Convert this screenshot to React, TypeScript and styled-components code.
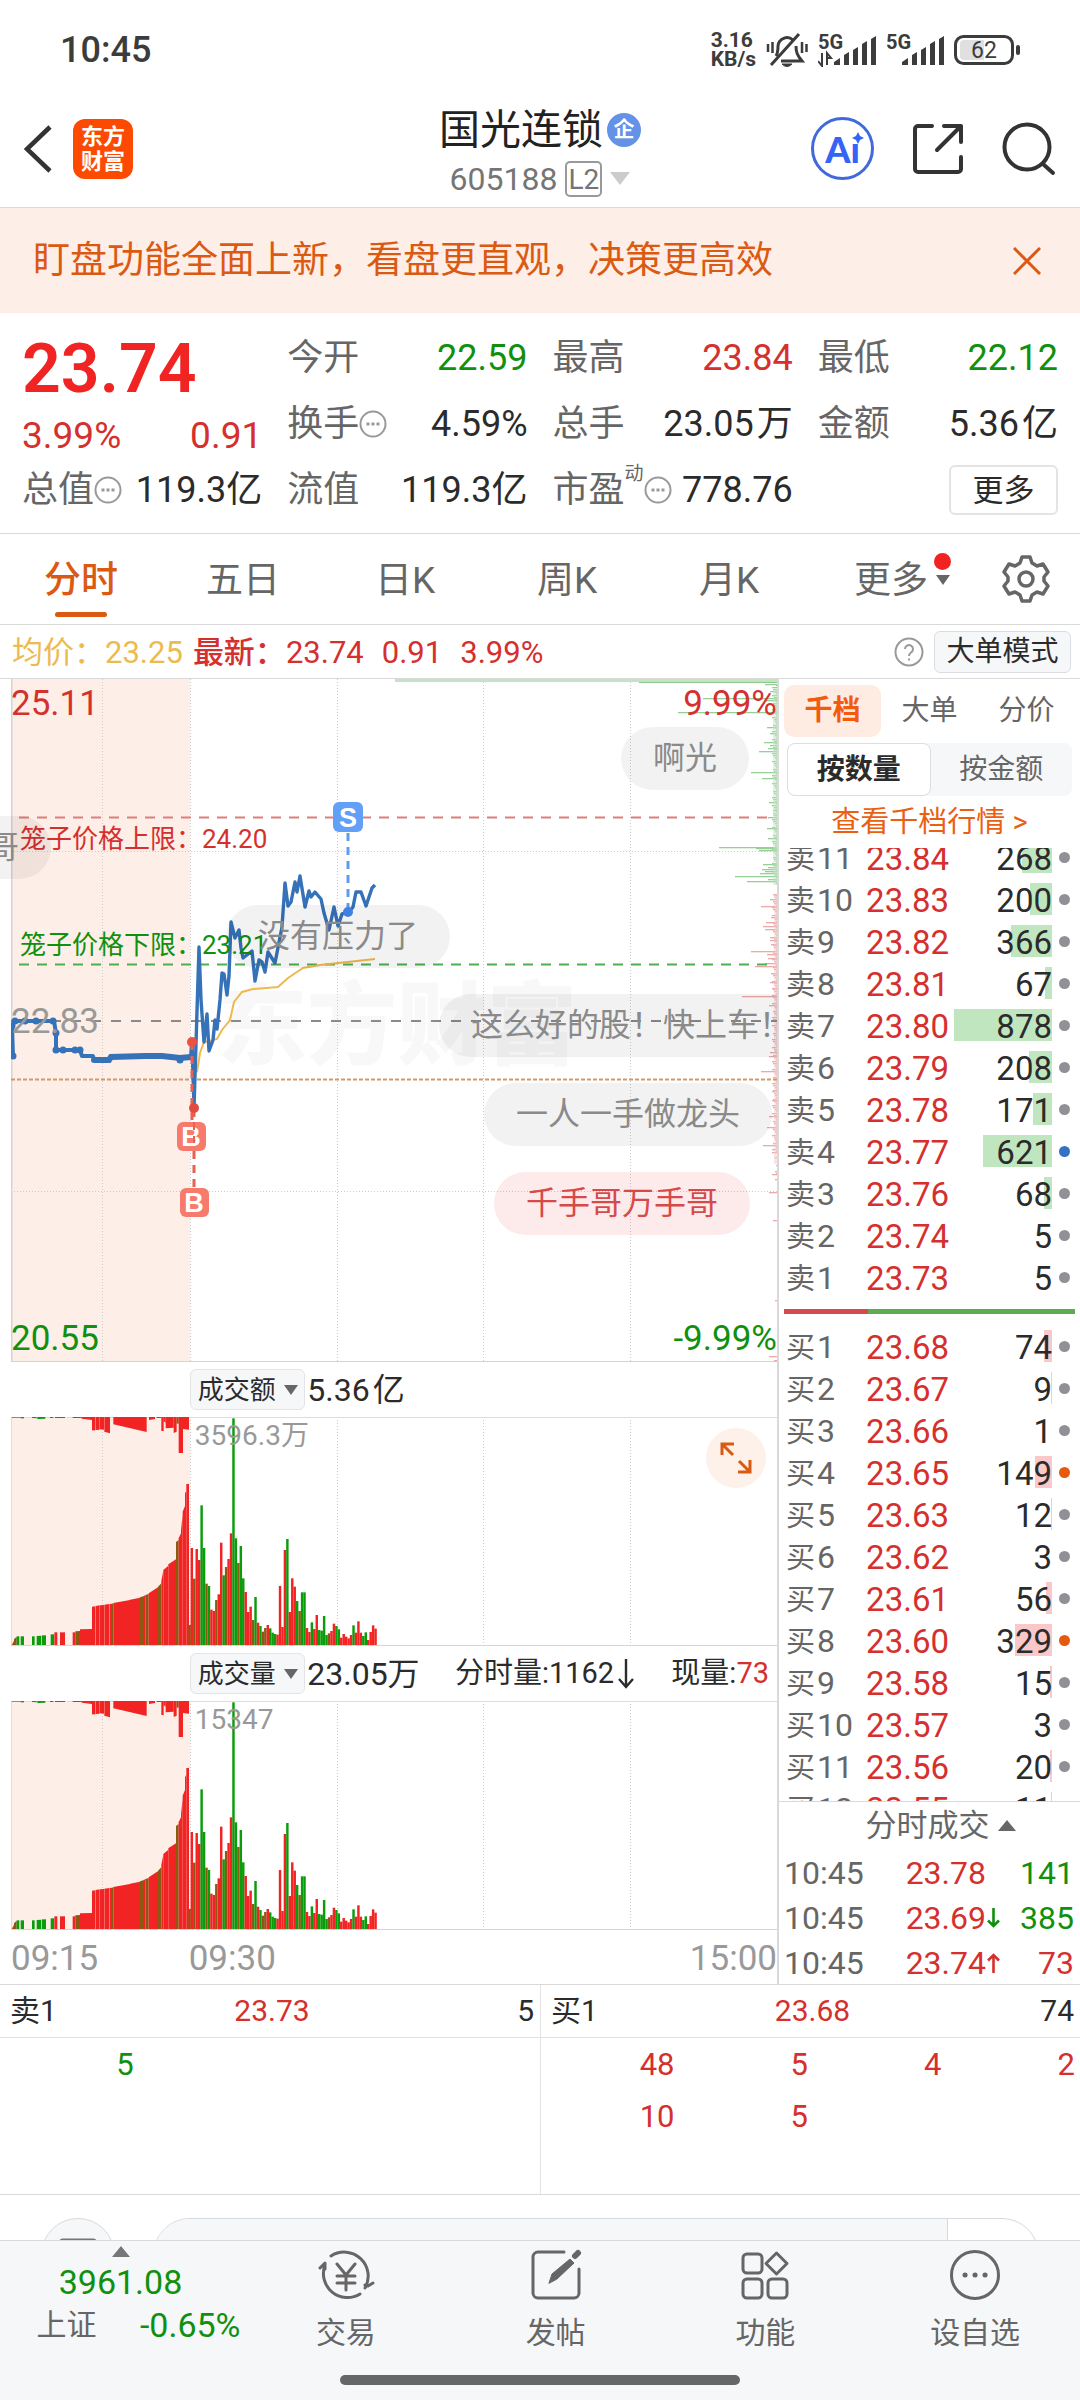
import React, { useState } from 'react';
import styled, { createGlobalStyle, css } from 'styled-components';

const c = {
  red: '#d5302e',
  hotRed: '#f12424',
  green: '#10900f',
  orange: '#db5a12',
  brand: '#fc4a02',
  ink: '#2b2b2b',
  gray: '#666',
  mute: '#999',
  line: '#d9d9d9',
  soft: '#f6f7f9',
  peach: '#fdeee7',
  blue: '#3572b8',
};

const Global = createGlobalStyle`
  * { box-sizing: border-box; }
  body {
    margin: 0;
    background: #fff;
    color: ${c.ink};
    font-family: Roboto, "Noto Sans CJK SC", sans-serif;
    font-size: 30px;
    line-height: 1;
    white-space: nowrap;
  }
  button {
    font: inherit;
    color: inherit;
    background: none;
    border: 0;
    padding: 0;
    margin: 0;
    cursor: pointer;
  }
  svg { display: block; }
`;

const Page = styled.div`
  min-height: 100vh;
  display: flex;
  flex-direction: column;
  overflow: hidden;
`;

/* ---------- status bar ---------- */
const StatusBar = styled.div`
  display: flex;
  align-items: center;
  justify-content: space-between;
  height: 98px;
  padding: 2px 60px 0;
  color: #3c3c3c;
`;
const Clock = styled.time`
  font-size: 36px;
  font-weight: 500;
`;
const StatusIcons = styled.div`
  display: flex;
  align-items: center;
  gap: 10px;
`;
const NetSpeed = styled.div`
  font-size: 21px;
  font-weight: 700;
  line-height: 19px;
`;
const SignalTag = styled.text`
  font: 700 20px Roboto, sans-serif;
  fill: #3c3c3c;
`;
const BatteryText = styled.text`
  font: 400 23px Roboto, sans-serif;
  fill: #3c3c3c;
  text-anchor: middle;
`;

/* ---------- header ---------- */
const Header = styled.header`
  display: grid;
  grid-template-columns: 1fr auto 1fr;
  align-items: center;
  height: 110px;
  padding: 0 24px;
  border-bottom: 1px solid ${c.line};
`;
const HeaderSide = styled.div<{ $end?: boolean }>`
  display: flex;
  align-items: center;
  gap: ${p => (p.$end ? 38 : 21)}px;
  padding-bottom: 8px;
  justify-content: ${p => (p.$end ? 'flex-end' : 'flex-start')};
`;
const Logo = styled.div`
  width: 60px;
  height: 60px;
  padding-top: 5px;
  border-radius: 12px;
  background: ${c.brand};
  color: #fff;
  font-size: 22px;
  line-height: 25px;
  font-weight: 700;
  text-align: center;
`;
const TitleBlock = styled.div`
  display: flex;
  flex-direction: column;
  align-items: center;
  gap: 10px;
`;
const TitleLine = styled.div`
  display: flex;
  align-items: center;
  gap: 4px;
`;
const StockName = styled.h1`
  margin: 0;
  font-size: 41px;
  font-weight: 400;
  line-height: 42px;
  color: #222;
`;
const CorpBadge = styled.span`
  width: 34px;
  height: 34px;
  border-radius: 50%;
  background: #6492e6;
  color: #fff;
  font-size: 21px;
  line-height: 33px;
  font-weight: 700;
  text-align: center;
`;
const CodeLine = styled.div`
  display: flex;
  align-items: center;
  gap: 8px;
  font-size: 32px;
  line-height: 36px;
  color: #757575;
`;
const LevelTag = styled.span`
  width: 37px;
  height: 36px;
  border: 2px solid #999;
  border-radius: 5px;
  font-size: 28px;
  line-height: 33px;
  text-align: center;
`;
const Triangle = styled.i<{ $size: number; $color: string; $up?: boolean }>`
  width: 0;
  height: 0;
  border: ${p => p.$size}px solid transparent;
  ${p =>
    p.$up
      ? css`border-top: 0; border-bottom: ${p.$size + 2}px solid ${p.$color};`
      : css`border-bottom: 0; border-top: ${p.$size + 3}px solid ${p.$color};`}
`;
const AiButton = styled.button`
  position: relative;
  width: 63px;
  height: 63px;
  border: 3px solid #4169dd;
  border-radius: 50%;
  color: #3563f5;
  font-family: Lato, sans-serif;
  font-size: 36px;
  font-weight: 900;
  svg { position: absolute; left: 37px; top: 11px; }
`;

/* ---------- banner ---------- */
const Banner = styled.div`
  display: flex;
  align-items: center;
  justify-content: space-between;
  height: 105px;
  padding: 0 39px 0 33px;
  background: ${c.peach};
  color: ${c.orange};
  font-size: 37px;
`;

/* ---------- quote ---------- */
const Quote = styled.section`
  display: grid;
  grid-template-columns: repeat(4, 1fr);
  grid-template-rows: repeat(3, 66px);
  column-gap: 25px;
  padding: 12px 22px 10px;
  border-bottom: 1px solid ${c.line};
`;
const PriceCell = styled.div`
  grid-row: span 2;
  display: flex;
  flex-direction: column;
  color: ${c.hotRed};
`;
const BigPrice = styled.strong`
  font-size: 68px;
  line-height: 88px;
  font-weight: 600;
`;
const ChangeRow = styled.div`
  display: flex;
  justify-content: space-between;
  font-size: 37px;
  line-height: 46px;
  color: ${c.red};
`;
const Stat = styled.div<{ $color?: string }>`
  display: flex;
  align-items: center;
  justify-content: space-between;
  font-size: 36px;
  color: ${p => p.$color || c.ink};
`;
const Unit = styled.span`
  margin-left: 3px;
`;
const StatLabel = styled.span`
  display: flex;
  align-items: center;
  color: ${c.gray};
  sup { font-size: 19px; align-self: flex-start; margin-top: -8px; }
`;
const MoreCell = styled.div`
  display: flex;
  align-items: center;
  justify-content: flex-end;
`;
const MoreButton = styled.button`
  width: 109px;
  height: 50px;
  border: 2px solid #e4e4e4;
  border-radius: 6px;
  font-size: 31px;
`;

/* ---------- period tabs ---------- */
const Tabs = styled.nav`
  display: flex;
  height: 91px;
  border-bottom: 1px solid ${c.line};
`;
const Tab = styled.button<{ $active?: boolean }>`
  flex: 3;
  position: relative;
  padding-top: 2px;
  font-size: 37px;
  color: ${p => (p.$active ? c.orange : c.gray)};
  font-weight: ${p => (p.$active ? 500 : 400)};
  ${p =>
    p.$active &&
    css`
      &::after {
        content: '';
        position: absolute;
        left: calc(50% - 26px);
        bottom: 7px;
        width: 52px;
        height: 5px;
        border-radius: 3px;
        background: ${c.orange};
      }
    `}
`;
const TabMark = styled.span`
  position: absolute;
  left: calc(50% + 43px);
  top: 19px;
  display: flex;
  flex-direction: column;
  align-items: center;
  gap: 5px;
`;
const Dot = styled.i<{ $size: number; $color: string }>`
  display: inline-block;
  width: ${p => p.$size}px;
  height: ${p => p.$size}px;
  border-radius: 50%;
  background: ${p => p.$color};
`;
const GearButton = styled.button`
  flex: 2;
  display: flex;
  align-items: center;
  justify-content: center;
`;

/* ---------- info line ---------- */
const InfoLine = styled.div`
  display: flex;
  align-items: center;
  gap: 10px;
  height: 54px;
  padding: 1px 9px 0 12px;
  border-bottom: 1px solid ${c.line};
  font-size: 31px;
  color: ${c.red};
`;
const AvgText = styled.span`
  color: #ecbb50;
`;
const LatestText = styled.span`
  display: flex;
  gap: 18px;
  flex: 1;
  b { font-weight: 500; margin-right: -18px; }
`;
const ModeButton = styled.button`
  width: 137px;
  height: 42px;
  border: 1px solid #dadde2;
  border-radius: 6px;
  background: ${c.soft};
  color: ${c.ink};
  font-size: 28px;
`;

/* ---------- main area ---------- */
const Main = styled.main`
  display: flex;
  border-bottom: 1px solid ${c.line};
`;
const Charts = styled.div`
  flex: 1;
  min-width: 0;
  position: relative;
  padding-left: 11px;
  overflow: hidden;
  border-right: 2px solid ${c.line};
`;
const Plot = styled.svg`
  width: 100%;
`;
const PlotBox = styled.div`
  position: relative;
`;
const AxisLabel = styled.span<{ $color: string; $x: 'left' | 'right'; $y: string }>`
  position: absolute;
  ${p => p.$x}: 0;
  top: ${p => p.$y};
  font-size: 35px;
  line-height: 34px;
  color: ${p => p.$color};
`;
const CageLabel = styled.span<{ $color: string; $top: number }>`
  position: absolute;
  left: 9px;
  top: ${p => p.$top}px;
  font-size: 26px;
  line-height: 30px;
  color: ${p => p.$color};
`;
const Bubble = styled.span<{ $top: number; $right?: number; $left?: number; $hot?: boolean }>`
  position: absolute;
  top: ${p => p.$top}px;
  ${p => (p.$left !== undefined ? `left: ${p.$left}px;` : `right: ${p.$right}px;`)}
  height: 63px;
  padding: 0 32px;
  border-radius: 32px;
  background: ${p => (p.$hot ? 'rgba(240,60,60,.1)' : 'rgba(0,0,0,.05)')};
  color: ${p => (p.$hot ? '#d64a4a' : '#8a8a8a')};
  font-size: 32px;
  line-height: 63px;
`;
const Watermark = styled.text`
  font: 900 90px "Noto Sans CJK SC", sans-serif;
  fill: #f8f8f8;
`;
const MarkText = styled.text`
  font: 700 27px "Liberation Sans", sans-serif;
  fill: #fff;
  text-anchor: middle;
`;
const PanelHead = styled.div`
  display: flex;
  align-items: center;
  height: 55px;
  padding: 0 8px 0 23.4%;
  font-size: 32px;
`;
const MetricButton = styled.button`
  display: flex;
  align-items: center;
  justify-content: center;
  gap: 8px;
  width: 115px;
  height: 41px;
  margin-right: 2px;
  border: 1px solid #e2e4e8;
  border-radius: 6px;
  background: ${c.soft};
  font-size: 26px;
`;
const SideMetric = styled.span`
  display: flex;
  align-items: center;
  margin-left: auto;
  font-size: 29px;
  em { font-style: normal; color: ${c.red}; }
`;
const PeakLabel = styled.span`
  position: absolute;
  left: 24%;
  top: 4px;
  font-size: 28px;
  line-height: 30px;
  color: ${c.mute};
`;
const ExpandButton = styled.button`
  position: absolute;
  right: 11px;
  top: 11px;
  width: 60px;
  height: 60px;
  border-radius: 50%;
  background: #fdf1ea;
  display: flex;
  align-items: center;
  justify-content: center;
`;
const TimeAxis = styled.div`
  display: grid;
  grid-template-columns: 23.2% 1fr auto;
  align-items: center;
  height: 54px;
  padding-top: 2px;
  font-size: 35px;
  color: ${c.mute};
`;

/* ---------- order book ---------- */
const Side = styled.aside`
  width: 301px;
  padding-top: 6px;
`;
const BookTabs = styled.div`
  display: flex;
  height: 52px;
  margin: 0 5px 6px;
`;
const BookTab = styled.button<{ $active?: boolean }>`
  flex: 1;
  border-radius: 10px;
  font-size: 28px;
  background: ${p => (p.$active ? '#feece3' : 'transparent')};
  color: ${p => (p.$active ? '#f25a0c' : c.gray)};
  font-weight: ${p => (p.$active ? 700 : 400)};
`;
const Segment = styled.div`
  display: flex;
  height: 53px;
  margin: 0 8px;
  border-radius: 8px;
  background: ${c.soft};
`;
const SegmentButton = styled.button<{ $active?: boolean }>`
  flex: 1;
  border-radius: 8px;
  font-size: 28px;
  color: ${p => (p.$active ? c.ink : c.gray)};
  font-weight: ${p => (p.$active ? 700 : 400)};
  ${p => p.$active && css`border: 1px solid #dcdee2; background: #fff;`}
`;
const BookLink = styled.a`
  display: block;
  height: 52px;
  line-height: 52px;
  text-align: center;
  text-decoration: none;
  font-size: 29px;
  color: #ea6012;
`;
const BookClip = styled.div<{ $height: number; $bottom?: boolean }>`
  height: ${p => p.$height}px;
  padding-left: 7px;
  overflow: hidden;
  display: flex;
  flex-direction: column;
  justify-content: ${p => (p.$bottom ? 'flex-end' : 'flex-start')};
`;
const BookTable = styled.table`
  width: 100%;
  flex-shrink: 0;
  table-layout: fixed;
  border-collapse: collapse;
  td, th { height: 42px; padding: 0; font-weight: 400; }
`;
const LevelCell = styled.th`
  width: 72px;
  font-size: 29px;
  text-align: left;
  color: ${c.gray};
  span { margin-left: 2px; font-size: 32px; }
`;
const BookPrice = styled.td`
  width: 91px;
  text-align: right;
  font-size: 33px;
  color: ${c.red};
`;
const QtyCell = styled.td`
  position: relative;
  text-align: right;
  font-size: 33px;
`;
const QtyBar = styled.i<{ $buy?: boolean }>`
  position: absolute;
  right: 0;
  top: 4px;
  height: 32px;
  background: ${p => (p.$buy ? '#fac8c8' : '#c0e6c0')};
`;
const QtyText = styled.span`
  position: relative;
`;
const FlagCell = styled.td`
  width: 28px;
  text-align: center;
  i { vertical-align: middle; margin: 0 4px 6px 0; }
`;
const RatioBar = styled.div`
  display: flex;
  height: 5px;
  margin: 10px 5px 12px;
  background: #5dac50;
`;
const RatioBuy = styled.i`
  background: #d24b4d;
`;
const TradesHead = styled.button`
  display: flex;
  width: 100%;
  height: 48px;
  align-items: center;
  justify-content: center;
  gap: 8px;
  padding-left: 22px;
  border-top: 1px solid ${c.line};
  font-size: 31px;
  color: ${c.gray};
`;
const TradeTable = styled.table`
  width: 100%;
  table-layout: fixed;
  border-collapse: collapse;
  font-size: 32px;
  td { height: 45px; padding: 2px 0 0; text-align: right; }
  td:first-child { width: 106px; padding-left: 5px; text-align: left; color: ${c.gray}; }
  td:nth-child(2) { width: 101px; color: ${c.red}; }
  td:nth-child(3) { width: 17px; }
  td:last-child { padding-right: 6px; }
`;
const TradeQty = styled.td<{ $color: string }>`
  color: ${p => p.$color};
`;

/* ---------- queue ---------- */
const Queues = styled.section`
  display: grid;
  grid-template-columns: 1fr 1fr;
  border-bottom: 1px solid ${c.line};
`;
const Queue = styled.div`
  & + & { border-left: 1px solid #e4e4e4; }
`;
const QueueHead = styled.div`
  display: grid;
  grid-template-columns: 1fr auto 1fr;
  align-items: center;
  height: 53px;
  padding: 0 6px 0 10px;
  border-bottom: 1px solid #e0e0e0;
  font-size: 30px;
  b { font-weight: 400; color: ${c.red}; }
  span:last-child { text-align: right; }
`;
const QueueGrid = styled.div<{ $color: string }>`
  display: grid;
  grid-template-columns: repeat(4, 1fr);
  grid-template-rows: repeat(3, 52px);
  align-items: center;
  padding-right: 5px;
  text-align: right;
  font-size: 31px;
  color: ${p => p.$color};
`;

/* ---------- comment strip ---------- */
const Strip = styled.div`
  display: flex;
  gap: 38px;
  height: 45px;
  padding: 23px 41px 0;
  overflow: hidden;
`;
const RoundButton = styled.button`
  flex: none;
  display: flex;
  align-items: flex-start;
  justify-content: center;
  width: 74px;
  height: 74px;
  padding-top: 19px;
  border: 1px solid ${c.line};
  border-radius: 50%;
  background: ${c.soft};
`;
const StripPill = styled.div`
  flex: 1;
  display: flex;
  height: 74px;
  border: 1px solid #d5d9de;
  border-radius: 37px;
  overflow: hidden;
`;
const StripInput = styled.input`
  flex: 1;
  min-width: 0;
  border: 0;
  background: ${c.soft};
`;
const StripAction = styled.button`
  width: 91px;
  border-left: 1px solid ${c.line};
`;

/* ---------- bottom bar ---------- */
const Footer = styled.footer`
  flex: 1;
  border-top: 1px solid ${c.line};
  background: ${c.soft};
`;
const FooterRow = styled.div`
  display: flex;
  height: 134px;
`;
const IndexBlock = styled.button`
  width: 241px;
  display: flex;
  flex-direction: column;
  align-items: center;
  padding-top: 5px;
  font-size: 34px;
  color: ${c.green};
`;
const IndexValue = styled.span`
  margin-top: 2px;
  line-height: 46px;
`;
const IndexLine = styled.span`
  display: flex;
  justify-content: space-between;
  width: 204px;
  line-height: 40px;
  margin-left: 36px;
  font-size: 34px;
  span { font-size: 30px; color: ${c.gray}; }
`;
const NavItem = styled.button`
  flex: 1;
  display: flex;
  flex-direction: column;
  align-items: center;
  gap: 14px;
  padding-top: 8px;
  font-size: 30px;
  line-height: 36px;
  color: ${c.gray};
`;
const HomeBar = styled.div`
  width: 37%;
  height: 10px;
  margin: 0 auto;
  border-radius: 5px;
  background: #666;
`;

/* ---------- data ---------- */
const priceLine: [number, number][] = [
  [192, 1042], [194, 1108], [199, 947], [201, 1000], [204, 1042], [207, 1014], [209, 1051], [213, 1040], [215, 1020],
  [217, 1029], [220, 1000], [222, 973], [224, 974], [227, 995], [229, 976], [231, 922], [235, 938], [239, 930],
  [241, 948], [243, 958], [252, 951], [255, 981], [259, 960], [262, 962], [265, 972], [268, 952], [275, 963],
  [282, 927], [285, 883], [288, 906], [291, 902], [295, 882], [297, 892], [300, 876], [305, 907], [309, 891],
  [311, 897], [315, 892], [321, 899], [324, 913], [329, 930], [334, 907], [338, 926], [342, 914], [349, 912],
  [353, 907], [356, 892], [361, 892], [366, 906], [372, 888], [375, 885],
];
const auctionLine: [number, number][] = [
  [13, 1056], [12, 1026], [15, 1021], [54, 1021], [56, 1033], [56, 1050], [80, 1050], [82, 1056], [93, 1056],
  [94, 1060], [109, 1060], [111, 1057], [145, 1056], [162, 1056], [180, 1058], [191, 1057], [192, 1042],
];
const averageLine: [number, number][] = [
  [194, 1060], [197, 1072], [200, 1053], [204, 1042], [217, 1039], [222, 1030], [230, 1020], [234, 1002], [242, 992],
  [253, 989], [278, 987], [288, 978], [303, 968], [320, 965], [375, 959],
];
const auctionDots: [number, number][] = [
  [13, 1056], [12, 1026], [15, 1021], [25, 1021], [36, 1021], [53, 1021], [56, 1033], [56, 1050], [63, 1050],
  [75, 1050], [80, 1050], [180, 1060],
];
const toPoints = (pts: [number, number][]) => pts.map(([x, y]) => `${x - 11},${y - 679}`).join(' ');

const depth: [number, number, boolean][] = [
  [684, 12, true], [691, 7, true], [698, 74, true], [700, 12, true], [712, 99, true], [727, 10, true], [733, 7, true],
  [742, 13, true], [745, 7, true], [748, 9, true], [751, 18, true], [772, 26, true], [778, 15, true], [802, 8, true],
  [810, 4, true], [817, 9, true], [828, 10, true], [838, 9, true], [847, 58, true], [848, 21, true], [850, 18, true],
  [864, 14, true], [867, 9, true], [869, 15, true], [871, 12, true], [873, 17, true], [876, 42, true], [879, 9, true],
  [881, 30, true], [894, 4, false], [899, 7, false], [906, 16, false], [917, 6, false], [922, 11, false],
  [926, 14, false], [929, 12, false], [937, 7, false], [940, 7, false], [944, 6, false], [951, 26, false],
  [954, 10, false], [958, 9, false], [963, 12, false], [966, 22, false], [973, 6, false], [982, 7, false],
  [988, 5, false], [996, 35, false], [1005, 8, false], [1052, 7, false], [1056, 8, false], [1071, 16, false],
  [1090, 4, false], [1100, 5, false], [1116, 8, false], [1127, 10, false], [1145, 14, false], [1152, 5, false],
  [1174, 5, false], [1192, 8, false], [1220, 4, false], [1300, 2, false], [1356, 8, false], [1360, 3, false],
];
const depthNoise = Array.from({ length: 250 }, (_, i) => {
  const y = 685 + i * 2;
  return [y, ((i * 37) % 11) % 5 + (y > 1150 ? -2 : 1), y < 884] as [number, number, boolean];
}).filter(([y, w]) => w > 0 && (y < 884 || y > 893));

type Tone = 'r' | 'g' | 'm';
const minuteBars = (
  '444r 536m 447r 480r 316g 444g 551m 558g 629r 633r 600m 583r 428r 526g 501m 477r 400r 55g 415g 489m 438g 535g ' +
  '576r 636r 620r 660m 591g 668r 678g 695m 684m 675r 685g 698g 702g 704r 558r 681r 450r 417g 636r 535r 560r 603g ' +
  '633m 577g 577g 684r 696r 667g 687r 645r 690g 692g 648g 705g 700m 693r 671r 678g 688g 713r 702r 710r 715r 705r ' +
  '676g 698r 664r 698r 708g 697g 720r 696r 676r 686r'
)
  .split(' ')
  .map(t => ({ h: (738 - parseInt(t, 10)) / 3, tone: t.slice(-1) as Tone }));

const toneColor: Record<Tone, string> = { r: '#f12323', g: '#0b9c0b', m: '#8a5a12' };

/* start, end, value at start, value at end, tone */
const auctionVolume: [number, number, number, number, Tone][] = [
  [35, 42, 736, 722, 'r'], [42, 50, 718, 710, 'm'], [50, 58, 709, 709, 'g'], [62, 72, 709, 709, 'g'],
  [96, 104, 709, 709, 'g'], [110, 124, 708, 707, 'g'], [126, 138, 706, 706, 'g'], [152, 162, 703, 703, 'g'],
  [163, 172, 697, 697, 'r'], [180, 195, 697, 697, 'r'], [218, 226, 697, 697, 'r'], [226, 240, 694, 693, 'm'],
  [240, 276, 688, 687, 'r'], [276, 286, 620, 619, 'r'], [287, 299, 618, 616, 'r'], [300, 312, 616, 615, 'r'],
  [313, 328, 614, 612, 'r'], [329, 336, 612, 611, 'r'], [336, 340, 611, 610, 'm'], [340, 390, 609, 600, 'r'],
  [390, 420, 599, 593, 'r'], [420, 432, 592, 588, 'm'], [432, 436, 587, 586, 'r'], [436, 446, 585, 582, 'm'],
  [446, 474, 580, 562, 'r'], [474, 484, 560, 550, 'm'], [484, 490, 542, 512, 'r'], [490, 505, 510, 497, 'r'],
  [505, 528, 493, 478, 'r'], [528, 536, 426, 420, 'm'], [536, 543, 415, 400, 'r'], [543, 548, 390, 345, 'r'],
  [548, 555, 335, 318, 'r'], [555, 559, 280, 272, 'r'], [559, 567, 252, 252, 'r'],
];
const auctionUnmatched: [number, number, number, number, Tone][] = [
  [35, 45, 2, 2, 'r'], [45, 62, 2, 2, 'g'], [62, 72, 4, 4, 'g'], [96, 110, 3, 4, 'g'], [112, 136, 6, 5, 'g'],
  [150, 160, 3, 3, 'g'], [165, 195, 3, 3, 'r'], [218, 245, 3, 3, 'm'], [245, 276, 5, 9, 'r'], [276, 286, 40, 40, 'r'],
  [287, 299, 39, 38, 'r'], [300, 312, 37, 38, 'r'], [313, 330, 44, 49, 'r'], [340, 440, 22, 45, 'r'],
  [447, 465, 9, 6, 'r'], [470, 484, 3, 3, 'r'], [484, 491, 42, 42, 'r'], [491, 497, 12, 18, 'r'],
  [497, 521, 34, 32, 'r'], [521, 530, 48, 44, 'r'], [530, 536, 20, 20, 'm'], [536, 549, 108, 108, 'r'],
  [549, 567, 36, 38, 'r'],
];

const fills = (rows: [number, number, number, number, Tone][]) =>
  rows.map(([a, b, v1, v2, tone]) => ({
    x: a / 3 - 11,
    w: (b - a) / 3,
    v1,
    v2,
    color: toneColor[tone],
  }));

const maxQty = 878;
type Level = [string, number, string, number, string?];
const sells: Level[] = [
  ['卖', 11, '23.84', 268], ['卖', 10, '23.83', 200], ['卖', 9, '23.82', 366], ['卖', 8, '23.81', 67],
  ['卖', 7, '23.80', 878], ['卖', 6, '23.79', 208], ['卖', 5, '23.78', 171], ['卖', 4, '23.77', 621, '#3572c4'],
  ['卖', 3, '23.76', 68], ['卖', 2, '23.74', 5], ['卖', 1, '23.73', 5],
];
const buys: Level[] = [
  ['买', 1, '23.68', 74], ['买', 2, '23.67', 9], ['买', 3, '23.66', 1], ['买', 4, '23.65', 149, '#e8590c'],
  ['买', 5, '23.63', 12], ['买', 6, '23.62', 3], ['买', 7, '23.61', 56], ['买', 8, '23.60', 329, '#e8590c'],
  ['买', 9, '23.58', 15], ['买', 10, '23.57', 3], ['买', 11, '23.56', 20], ['买', 12, '23.55', 11],
];

/* ---------- pieces ---------- */
const InfoDots = () => (
  <svg width="28" height="28" viewBox="0 0 28 28" fill="none" stroke="#999" strokeWidth="2">
    <circle cx="14" cy="14" r="12.5" />
    <path d="M7.5 14h3M12.5 14h3M17.5 14h3" strokeWidth="3" />
  </svg>
);

const Signal = ({ data }: { data?: boolean }) => (
  <svg width="58" height="34" viewBox="0 0 58 34" fill="#3c3c3c">
    <SignalTag x="0" y="16">5G</SignalTag>
    {data && <path d="M4 20v12M0 28l4 5v-6M9 32V20l4 5h-4" stroke="#3c3c3c" strokeWidth="2" fill="none" />}
    <path d="M16 32v-3l6-4v7zM26 32V22l5-3v13zM35 32V17l5-3v18zM44 32V11l5-3v24zM53 32V6l5-3v29z" />
  </svg>
);

const Arrow = ({ up, color }: { up?: boolean; color: string }) => (
  <svg width="15" height="24" viewBox="0 0 15 24" fill="none" stroke={color} strokeWidth="2.6">
    <path d={up ? 'M7.5 22V4M2 9.5L7.5 4l5.5 5.5' : 'M7.5 2v18M2 14.5L7.5 20l5.5-5.5'} />
  </svg>
);

const LongArrow = () => (
  <svg width="22" height="32" viewBox="0 0 22 32" fill="none" stroke={c.ink} strokeWidth="2.4">
    <path d="M12 1v28M5 21l7 8 7-8" />
  </svg>
);

const Book = ({ rows, buy }: { rows: Level[]; buy?: boolean }) => (
  <BookTable>
    <tbody>
      {rows.map(([side, n, price, qty, flag]) => (
        <tr key={n}>
          <LevelCell scope="row">
            {side}
            <span>{n}</span>
          </LevelCell>
          <BookPrice>{price}</BookPrice>
          <QtyCell>
            {qty > 5 && <QtyBar $buy={buy} style={{ width: Math.max(1, (qty / maxQty) * 98) }} />}
            <QtyText>{qty}</QtyText>
          </QtyCell>
          <FlagCell>
            <Dot $size={11} $color={flag || '#909096'} />
          </FlagCell>
        </tr>
      ))}
    </tbody>
  </BookTable>
);

const gridX = [91, 179, 326, 472, 619];

const VolumePlot = () => (
  <Plot height="229" viewBox="0 0 766 229" preserveAspectRatio="none">
    <rect width="179" height="229" fill="#fdeee7" />
    <path d={gridX.map(x => `M${x}.5 0V229`).join('')} stroke="#ccc" strokeDasharray="1 2" />
    <path d="M0 .5H766M.5 0V229" stroke="#ddd" />
    {fills(auctionVolume).map((b, i) => (
      <path
        key={i}
        fill={b.color}
        d={`M${b.x} 229V${229 - (738 - b.v1) / 3}L${b.x + b.w} ${229 - (738 - b.v2) / 3}V229Z`}
      />
    ))}
    {fills(auctionUnmatched).map((b, i) => (
      <path key={i} fill={b.color} d={`M${b.x} 0V${b.v1 / 3}L${b.x + b.w} ${b.v2 / 3}V0Z`} />
    ))}
    <rect x="177.5" y="208" width="2.4" height="21" fill={toneColor.m} />
    {minuteBars.map((b, i) => (
      <rect key={i} x={179.6 + i * 2.45} y={229 - b.h} width="2.45" height={b.h} fill={toneColor[b.tone]} />
    ))}
    <path d="M0 228.5H766" stroke="#d4d4d4" />
  </Plot>
);

const PricePlot = () => (
  <Plot height="683" viewBox="0 0 766 683" preserveAspectRatio="none">
    <rect width="179" height="683" fill="#fdeee7" />
    <Watermark x="206" y="378">东方财富</Watermark>
    <path
      d={gridX.map(x => `M${x}.5 0V683`).join('') + 'M0 172.5H766M0 512.5H766'}
      stroke="#ccc"
      strokeDasharray="1 2"
    />
    <path d="M.5 0V683" stroke="#d4d4d4" strokeWidth="2" />
    <path d="M0 682.5H766" stroke="#d4d4d4" />
    <rect x="384" width="382" height="3" fill="#c3e3c3" />
    <rect x="628" y="3" width="138" height="1" fill="#8cc78c" />
    {[...depthNoise, ...depth].map(([y, w, sell], i) => (
      <rect key={i} x={766 - w} y={y - 679} width={w} height="1.3" fill={sell ? '#96d096' : '#eda8a8'} />
    ))}
    <rect x="762" y="10" width="4" height="196" fill="#bfe5bf" opacity=".5" />
    <rect x="763" y="215" width="3" height="270" fill="#f6c9c9" opacity=".5" />
    <path d="M8 138.5H757" stroke="#de7f7d" strokeWidth="2" strokeDasharray="10 8" />
    <path d="M8 285.5H757" stroke="#4fae4f" strokeWidth="2" strokeDasharray="10 8" />
    <path d="M0 342H766" stroke="#8a8a8a" strokeWidth="2" strokeDasharray="10 10" />
    <path d="M0 400.5H766" stroke="#d29a6c" strokeWidth="2" strokeDasharray="4 2" />
    <polyline points={toPoints(averageLine)} fill="none" stroke="#efb850" strokeWidth="2" />
    <polyline points={toPoints(auctionLine)} fill="none" stroke={c.blue} strokeWidth="4" strokeLinejoin="round" />
    <polyline
      points={toPoints(auctionLine.slice(9, 16))}
      fill="none"
      stroke={c.blue}
      strokeWidth="6"
      strokeLinecap="round"
    />
    {auctionDots.map(([x, y], i) => (
      <circle key={i} cx={x - 11} cy={y - 679} r="3.5" fill={c.blue} />
    ))}
    <polyline points={toPoints(priceLine)} fill="none" stroke={c.blue} strokeWidth="3.4" strokeLinejoin="round" />
    <g fill="none" strokeWidth="3" strokeDasharray="8 6">
      <path d="M181 363V445" stroke="#e8604f" />
      <path d="M183 430V510" stroke="#e8604f" />
      <path d="M337 154V233" stroke="#5f9bf0" />
    </g>
    <circle cx="181" cy="363" r="5" fill="#ef5040" />
    <circle cx="183" cy="429" r="5" fill="#e14a3e" />
    <circle cx="337" cy="233" r="5" fill="#4388f0" />
    <rect x="166" y="443" width="29" height="29" rx="6" fill="#f77b6c" />
    <MarkText x="180" y="467">B</MarkText>
    <rect x="169" y="509" width="29" height="29" rx="6" fill="#f77b6c" />
    <MarkText x="183" y="533">B</MarkText>
    <path d="M183 443v8M183 457v7" stroke="#e8604f" strokeWidth="2" />
    <rect x="322" y="123" width="30" height="30" rx="6" fill="#629ff7" />
    <MarkText x="337" y="148">S</MarkText>
  </Plot>
);

const stroke = { fill: 'none', stroke: '#666', strokeWidth: 3, strokeLinecap: 'round' as const, strokeLinejoin: 'round' as const };

const navItems = [
  {
    name: '交易',
    icon: (
      <svg width="58" height="52" viewBox="0 0 58 52" {...stroke}>
        <path d="M14 7a24 24 0 0 1 34 32M43 45A24 24 0 0 1 8 16M3 19l5-5v6M56 34l-5 3-3-1M20 15l9 11 9-11M29 26v15M20 27h18M20 34h18" />
      </svg>
    ),
  },
  {
    name: '发帖',
    icon: (
      <svg width="52" height="52" viewBox="0 0 52 52" {...stroke}>
        <path d="M34 3H8a5 5 0 0 0-5 5v36a5 5 0 0 0 5 5h36a5 5 0 0 0 5-5V20" />
        <path d="M19 34l3-9L40 10l4 4-17 16z" fill="#666" strokeWidth="1" />
        <path d="M45 7l3-3" strokeWidth="6" />
      </svg>
    ),
  },
  {
    name: '功能',
    icon: (
      <svg width="52" height="52" viewBox="0 0 52 52" {...stroke}>
        <rect x="4" y="5" width="19" height="19" rx="4" />
        <rect x="4" y="30" width="19" height="19" rx="4" />
        <rect x="29" y="30" width="19" height="19" rx="4" />
        <path d="M37.500 4L48 14.500 37.500 25 27 14.500z" />
      </svg>
    ),
  },
  {
    name: '设自选',
    icon: (
      <svg width="52" height="52" viewBox="0 0 52 52" {...stroke}>
        <circle cx="26" cy="26" r="23.500" />
        <path d="M16 26h.1M26 26h.1M36 26h.1" strokeWidth="5" />
      </svg>
    ),
  },
];

const periods = ['分时', '五日', '日K', '周K', '月K'];

export default function App() {
  const [period, setPeriod] = useState('分时');
  const [bookTab, setBookTab] = useState('千档');
  const [unit, setUnit] = useState('按数量');

  return (
    <Page>
      <Global />
      <StatusBar>
        <Clock>10:45</Clock>
        <StatusIcons>
          <NetSpeed>3.16<br />KB/s</NetSpeed>
          <svg width="42" height="36" viewBox="0 0 42 36" fill="none" stroke="#3c3c3c" strokeWidth="3">
            <path d="M10 24c2-3 2-6 2-10a9 9 0 0 1 15-6M30 14c0 6 1 9 6 15H15M5 33L33 2" />
            <path d="M16 32q5 5 10 0z" fill="#3c3c3c" strokeWidth="1" />
            <path d="M2 12v8M6.500 10v11M36 10v11M40.500 12v8" strokeWidth="2.500" />
          </svg>
          <Signal data />
          <Signal />
          <svg width="66" height="30" viewBox="0 0 66 30">
            <rect x="1.500" y="1.500" width="57" height="27" rx="8" fill="none" stroke="#3c3c3c" strokeWidth="3" />
            <path d="M10 5h20v20H10a4 4 0 0 1-4-4V9a4 4 0 0 1 4-4z" fill="#e0e0e0" />
            <rect x="62" y="10" width="4" height="10" rx="2" fill="#3c3c3c" />
            <BatteryText x="30" y="23">62</BatteryText>
          </svg>
        </StatusIcons>
      </StatusBar>

      <Header>
        <HeaderSide>
          <button aria-label="返回">
            <svg width="28" height="48" viewBox="0 0 28 48" fill="none" stroke="#333" strokeWidth="4.500">
              <path d="M26 2L3 24l23 22" />
            </svg>
          </button>
          <Logo>东方<br />财富</Logo>
        </HeaderSide>
        <TitleBlock>
          <TitleLine>
            <StockName>国光连锁</StockName>
            <CorpBadge>企</CorpBadge>
          </TitleLine>
          <CodeLine>
            605188
            <LevelTag>L2</LevelTag>
            <Triangle $size={10} $color="#ccc" />
          </CodeLine>
        </TitleBlock>
        <HeaderSide $end>
          <AiButton>
            Ai
            <svg width="14" height="14" viewBox="0 0 14 14">
              <path d="M0 0h14v12H0z" fill="#fff" />
              <path d="M7 1l2 4 4 2-4 2-2 4-2-4-4-2 4-2z" fill="#3563f5" />
            </svg>
          </AiButton>
          <button aria-label="分享">
            <svg width="52" height="52" viewBox="0 0 52 52" fill="none" stroke="#333" strokeWidth="4" strokeLinecap="round" strokeLinejoin="round">
              <path d="M20 3H6a3 3 0 0 0-3 3v40a3 3 0 0 0 3 3h40a3 3 0 0 0 3-3V34M32 3h17v16M49 3L25 27" />
            </svg>
          </button>
          <button aria-label="搜索">
            <svg width="54" height="54" viewBox="0 0 54 54" fill="none" stroke="#333" strokeWidth="4" strokeLinecap="round">
              <circle cx="25" cy="25" r="22.500" />
              <path d="M41 42l10 9" />
            </svg>
          </button>
        </HeaderSide>
      </Header>

      <Banner>
        <span>盯盘功能全面上新，看盘更直观，决策更高效</span>
        <button aria-label="关闭">
          <svg width="28" height="28" viewBox="0 0 28 28" stroke={c.orange} strokeWidth="3">
            <path d="M1 1l26 26M27 1L1 27" />
          </svg>
        </button>
      </Banner>

      <Quote>
        <PriceCell>
          <BigPrice>23.74</BigPrice>
          <ChangeRow><span>3.99%</span><span>0.91</span></ChangeRow>
        </PriceCell>
        <Stat $color={c.green}><StatLabel>今开</StatLabel>22.59</Stat>
        <Stat $color={c.red}><StatLabel>最高</StatLabel>23.84</Stat>
        <Stat $color={c.green}><StatLabel>最低</StatLabel>22.12</Stat>
        <Stat><StatLabel>换手<InfoDots /></StatLabel>4.59%</Stat>
        <Stat><StatLabel>总手</StatLabel><span>23.05<Unit>万</Unit></span></Stat>
        <Stat><StatLabel>金额</StatLabel><span>5.36<Unit>亿</Unit></span></Stat>
        <Stat><StatLabel>总值<InfoDots /></StatLabel>119.3亿</Stat>
        <Stat><StatLabel>流值</StatLabel>119.3亿</Stat>
        <Stat><StatLabel>市盈<sup>动</sup><InfoDots /></StatLabel>778.76</Stat>
        <MoreCell><MoreButton>更多</MoreButton></MoreCell>
      </Quote>

      <Tabs>
        {periods.map(p => (
          <Tab key={p} $active={p === period} onClick={() => setPeriod(p)}>{p}</Tab>
        ))}
        <Tab>
          更多
          <TabMark>
            <Dot $size={17} $color="#f02222" />
            <Triangle $size={7} $color="#666" />
          </TabMark>
        </Tab>
        <GearButton aria-label="设置">
          <svg width="48" height="48" viewBox="0 0 48 48" fill="none" stroke="#666" strokeWidth="3.500" strokeLinejoin="round">
            <path d="M20 2h8l2 6 5 3 6-2 5 8-4 5v4l4 5-5 8-6-2-5 3-2 6h-8l-2-6-5-3-6 2-5-8 4-5v-4l-4-5 5-8 6 2 5-3z" />
            <circle cx="24" cy="24" r="7" />
          </svg>
        </GearButton>
      </Tabs>

      <InfoLine>
        <AvgText>均价：23.25</AvgText>
        <LatestText>
          <b>最新：</b><span>23.74</span><span>0.91</span><span>3.99%</span>
        </LatestText>
        <button aria-label="说明">
          <svg width="30" height="30" viewBox="0 0 30 30" fill="none" stroke="#999" strokeWidth="2">
            <circle cx="15" cy="15" r="13.500" />
            <path d="M11 12a4 4 0 1 1 6 3.500c-1.500 1-2 1.500-2 3.500M15 21.500v2" />
          </svg>
        </button>
        <ModeButton>大单模式</ModeButton>
      </InfoLine>

      <Main>
        <Charts>
          <PlotBox>
            <PricePlot />
            <AxisLabel $color={c.red} $x="left" $y="8px">25.11</AxisLabel>
            <AxisLabel $color={c.red} $x="right" $y="8px">9.99%</AxisLabel>
            <AxisLabel $color={c.mute} $x="left" $y="326px">22.83</AxisLabel>
            <AxisLabel $color={c.green} $x="left" $y="643px">20.55</AxisLabel>
            <AxisLabel $color={c.green} $x="right" $y="643px">-9.99%</AxisLabel>
            <CageLabel $color={c.red} $top={145}>笼子价格上限：24.20</CageLabel>
            <CageLabel $color={c.green} $top={251}>笼子价格下限：23.21</CageLabel>
            <Bubble $top={48} $right={28}>啊光</Bubble>
            <Bubble $top={137} $left={-56}>哥</Bubble>
            <Bubble $top={226} $left={215}>没有压力了</Bubble>
            <Bubble $top={315} $right={-46}>这么好的股！快上车！</Bubble>
            <Bubble $top={404} $right={5}>一人一手做龙头</Bubble>
            <Bubble $top={493} $right={27} $hot>千手哥万手哥</Bubble>
          </PlotBox>
          <PanelHead>
            <MetricButton>成交额<Triangle $size={7} $color="#666" /></MetricButton>
            5.36<Unit>亿</Unit>
          </PanelHead>
          <PlotBox>
            <VolumePlot />
            <PeakLabel>3596.3万</PeakLabel>
            <ExpandButton aria-label="全屏">
              <svg width="32" height="32" viewBox="0 0 32 32" fill="none" stroke={c.orange} strokeWidth="3">
                <path d="M2 13V2h12M2 2l11 11M30 18v12H18M30 30L19 19" />
              </svg>
            </ExpandButton>
          </PlotBox>
          <PanelHead>
            <MetricButton>成交量<Triangle $size={7} $color="#666" /></MetricButton>
            23.05万
            <SideMetric>分时量:1162<LongArrow /></SideMetric>
            <SideMetric>现量:<em>73</em></SideMetric>
          </PanelHead>
          <PlotBox>
            <VolumePlot />
            <PeakLabel>15347</PeakLabel>
          </PlotBox>
          <TimeAxis>
            <span>09:15</span><span>09:30</span><span>15:00</span>
          </TimeAxis>
        </Charts>

        <Side>
          <BookTabs>
            {['千档', '大单', '分价'].map(t => (
              <BookTab key={t} $active={t === bookTab} onClick={() => setBookTab(t)}>{t}</BookTab>
            ))}
          </BookTabs>
          <Segment>
            {['按数量', '按金额'].map(t => (
              <SegmentButton key={t} $active={t === unit} onClick={() => setUnit(t)}>{t}</SegmentButton>
            ))}
          </Segment>
          <BookLink href="#depth">查看千档行情 &gt;</BookLink>
          <BookClip $height={451} $bottom><Book rows={sells} /></BookClip>
          <RatioBar><RatioBuy style={{ width: '29%' }} /></RatioBar>
          <BookClip $height={475}><Book rows={buys} buy /></BookClip>
          <TradesHead>分时成交<Triangle $size={9} $color="#666" $up /></TradesHead>
          <TradeTable>
            <tbody>
              <tr><td>10:45</td><td>23.78</td><td /><TradeQty $color={c.green}>141</TradeQty></tr>
              <tr><td>10:45</td><td>23.69</td><td><Arrow color={c.green} /></td><TradeQty $color={c.green}>385</TradeQty></tr>
              <tr><td>10:45</td><td>23.74</td><td><Arrow up color={c.red} /></td><TradeQty $color={c.red}>73</TradeQty></tr>
            </tbody>
          </TradeTable>
        </Side>
      </Main>

      <Queues>
        <Queue>
          <QueueHead><span>卖1</span><b>23.73</b><span>5</span></QueueHead>
          <QueueGrid $color={c.green}><span>5</span></QueueGrid>
        </Queue>
        <Queue>
          <QueueHead><span>买1</span><b>23.68</b><span>74</span></QueueHead>
          <QueueGrid $color={c.red}>
            <span>48</span><span>5</span><span>4</span><span>2</span><span>10</span><span>5</span>
          </QueueGrid>
        </Queue>
      </Queues>

      <Strip>
        <RoundButton aria-label="评论">
          <svg width="40" height="30" viewBox="0 0 40 30" fill="none" stroke="#777" strokeWidth="3">
            <rect x="2" y="2" width="36" height="26" rx="3" />
          </svg>
        </RoundButton>
        <StripPill>
          <StripInput aria-label="发表评论" />
          <StripAction aria-label="弹幕设置" />
        </StripPill>
      </Strip>

      <Footer>
        <FooterRow>
          <IndexBlock>
            <Triangle $size={9} $color="#777" $up />
            <IndexValue>3961.08</IndexValue>
            <IndexLine><span>上证</span>-0.65%</IndexLine>
          </IndexBlock>
          {navItems.map(n => (
            <NavItem key={n.name}>{n.icon}{n.name}</NavItem>
          ))}
        </FooterRow>
        <HomeBar />
      </Footer>
    </Page>
  );
}
